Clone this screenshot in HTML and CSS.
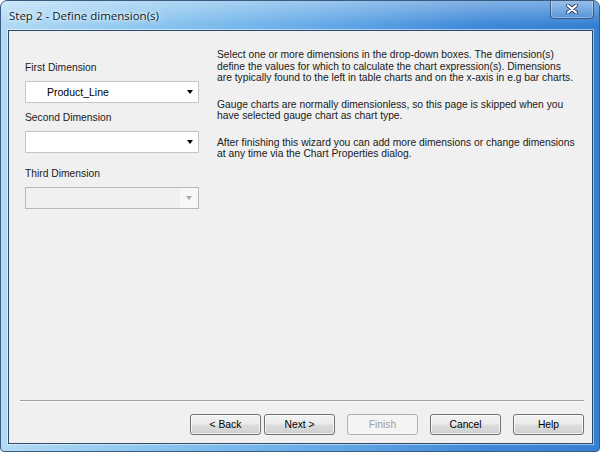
FILE: index.html
```html
<!DOCTYPE html>
<html lang="en">
<head>
  <meta charset="UTF-8" />
  <title>Step 2 - Define dimension(s)</title>
  <link rel="stylesheet" href="styles.css">
</head>
<body>

  <div class="window">

    <!-- Title bar -->
    <div class="titlebar">
      <span class="title">Step 2 - Define dimension(s)</span>
      <button class="close-btn" type="button" aria-label="Close">
        <svg width="12" height="10" viewBox="0 0 12 10" aria-hidden="true">
          <path d="M2 1.5 L10 8.5 M10 1.5 L2 8.5" stroke="#2b3f5c" stroke-width="4" stroke-linecap="round" />
          <path d="M2 1.5 L10 8.5 M10 1.5 L2 8.5" stroke="#ffffff" stroke-width="2.2" stroke-linecap="round" />
        </svg>
      </button>
    </div>

    <!-- Client area -->
    <div class="client">
      <div class="content">

        <div class="fields">
          <div class="field-label">First Dimension</div>
          <div class="combo">
            <span class="combo-value">Product_Line</span>
            <span class="combo-arrow"></span>
          </div>

          <div class="field-label">Second Dimension</div>
          <div class="combo">
            <span class="combo-value"></span>
            <span class="combo-arrow"></span>
          </div>

          <div class="field-label field-label-third">Third Dimension</div>
          <div class="combo combo-disabled">
            <span class="combo-value"></span>
            <span class="combo-drop"><span class="combo-arrow"></span></span>
          </div>
        </div>

        <div class="help-text">
          <p>Select one or more dimensions in the drop-down boxes. The dimension(s)<br>
          define the values for which to calculate the chart expression(s). Dimensions<br>
          are typically found to the left in table charts and on the x-axis in e.g bar charts.</p>
          <p>Gauge charts are normally dimensionless, so this page is skipped when you<br>
          have selected gauge chart as chart type.</p>
          <p>After finishing this wizard you can add more dimensions or change dimensions<br>
          at any time via the Chart Properties dialog.</p>
        </div>

      </div>

      <div class="separator"></div>

      <div class="buttons">
        <button class="btn" type="button">&lt; Back</button>
        <button class="btn btn-next" type="button">Next &gt;</button>
        <button class="btn" type="button" disabled>Finish</button>
        <button class="btn" type="button">Cancel</button>
        <button class="btn" type="button">Help</button>
      </div>
    </div>

  </div>

</body>
</html>
```

FILE: styles.css
```css
/* Reset */
* {
  margin: 0;
  padding: 0;
  box-sizing: border-box;
}

html, body {
  width: 600px;
  height: 452px;
  overflow: hidden;
  background: #ffffff;
  font-family: 'Liberation Sans', Arial, sans-serif;
  font-size: 10.3px;
  color: #000000;
}

/* Aero window frame */
.window {
  width: 600px;
  height: 452px;
  display: flex;
  flex-direction: column;
  border: 1px solid #3b5c80;
  border-radius: 7px 7px 4px 4px;
  background:
    linear-gradient(to bottom, rgba(255, 255, 255, 0.35) 0px, rgba(255, 255, 255, 0) 24px),
    linear-gradient(to right, #b2daf4 0%, #8cc6ef 25%, #63a8e6 55%, #4089d8 80%, #3580d2 100%);
  overflow: hidden;
}

/* Title bar */
.titlebar {
  height: 29px;
  display: flex;
  justify-content: space-between;
  align-items: flex-start;
  padding: 0 5px 0 8px;
}

.title {
  font-family: 'Open Sans', 'Noto Sans', sans-serif;
  font-size: 11.5px;
  line-height: 29px;
  color: #0c1a2c;
  text-shadow: 0 0 6px rgba(255, 255, 255, 0.9), 0 0 3px rgba(255, 255, 255, 0.9);
}

.close-btn {
  width: 44px;
  height: 19px;
  margin-top: -1px;
  display: flex;
  align-items: center;
  justify-content: center;
  border: 1px solid rgba(30, 55, 95, 0.7);
  border-top: none;
  border-radius: 0 0 4px 4px;
  background: linear-gradient(to bottom, rgba(255, 255, 255, 0.22), rgba(255, 255, 255, 0.05));
  box-shadow: inset 0 0 0 1px rgba(255, 255, 255, 0.35);
}

/* Client area */
.client {
  flex: 1;
  margin: 0 6px 7px 7px;
  display: flex;
  flex-direction: column;
  background: #f0f0f0;
  border: 1px solid #2e4a6a;
  box-shadow: 0 0 0 1px rgba(255, 255, 255, 0.5);
}

.content {
  flex: 1;
  display: flex;
  gap: 18px;
  padding: 18px 0 0 16px;
}

/* Dimension pickers */
.fields {
  width: 174px;
  padding-top: 12px;
  display: flex;
  flex-direction: column;
}

.field-label {
  line-height: 13px;
  margin-bottom: 7px;
  color: #1a1a1a;
}

.field-label-third {
  margin-top: 6px;
}

.combo {
  height: 22px;
  margin-bottom: 8px;
  display: flex;
  align-items: center;
  background: #ffffff;
  border: 1px solid #c4c4c4;
}

.combo-value {
  flex: 1;
  padding-left: 21px;
  font-size: 10.5px;
}

.combo-arrow {
  width: 0;
  height: 0;
  margin-right: 5px;
  border-left: 3.5px solid transparent;
  border-right: 3.5px solid transparent;
  border-top: 4px solid #000000;
}

.combo-disabled {
  background: #f0f0f0;
  border-color: #b8b8b8;
}

.combo-drop {
  width: 18px;
  height: 100%;
  display: flex;
  align-items: center;
  justify-content: center;
  background: #f7f7f7;
}

.combo-drop .combo-arrow {
  margin-right: 0;
  border-top-color: #a8a8a8;
}

/* Explanation text */
.help-text {
  width: 365px;
  color: #1a1a1a;
}

.help-text p {
  line-height: 11.5px;
  margin-bottom: 15px;
}

/* Bottom area */
.separator {
  height: 2px;
  margin: 0 8px 0 11px;
  border-top: 1px solid #a0a0a0;
  border-bottom: 1px solid #ffffff;
}

.buttons {
  display: flex;
  justify-content: flex-end;
  padding: 12px 8px 8px 0;
}

.btn {
  width: 71px;
  height: 21px;
  margin-left: 12px;
  font-family: 'Liberation Sans', Arial, sans-serif;
  font-size: 10.3px;
  color: #000000;
  border: 1px solid #707070;
  border-radius: 3px;
  background: linear-gradient(to bottom, #f2f2f2 0%, #ebebeb 48%, #dddddd 52%, #cfcfcf 100%);
  box-shadow: inset 0 0 0 1px rgba(255, 255, 255, 0.7);
}

.btn-next {
  margin-left: 3px;
}

.btn:disabled {
  color: #a0a0a0;
  border-color: #adb2b5;
  background: #f4f4f4;
  box-shadow: none;
}
```
